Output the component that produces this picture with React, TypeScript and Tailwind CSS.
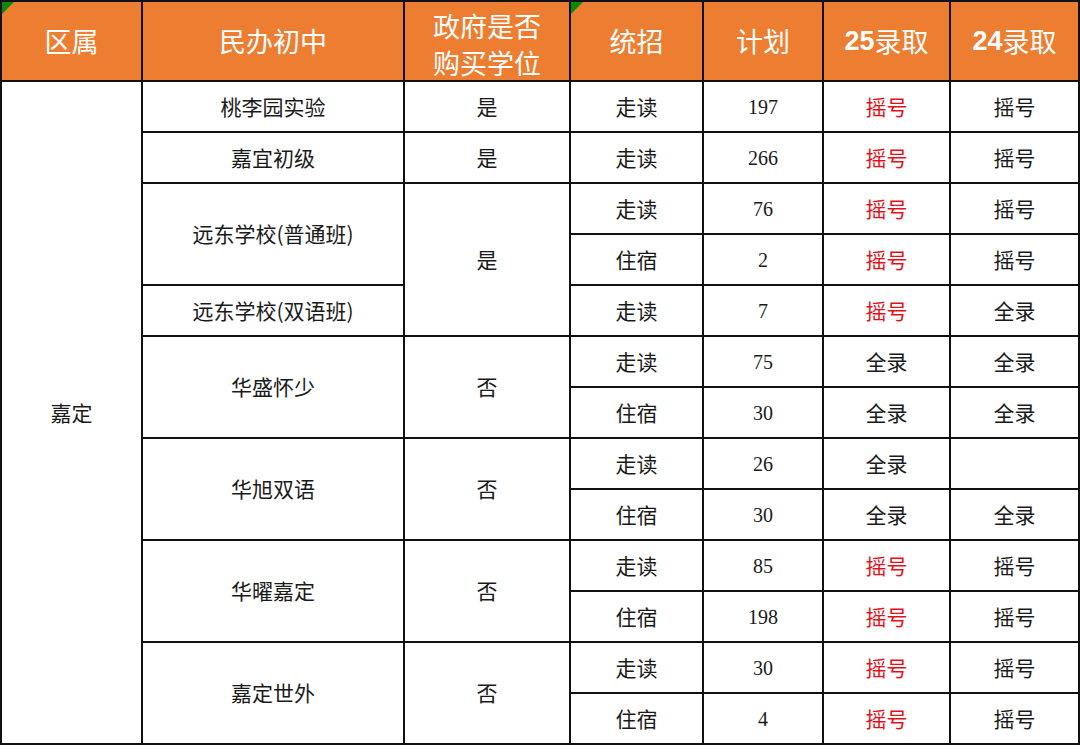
import React from "react"

const cjk = "font-['Noto_Sans_CJK_SC',sans-serif]"
const serif = "font-['Liberation_Serif','Noto_Sans_CJK_SC',serif]"

type Row = { type: string; plan: string; y25: string; y24: string }

const rows: Row[] = [
  { type: "走读", plan: "197", y25: "摇号", y24: "摇号" },
  { type: "走读", plan: "266", y25: "摇号", y24: "摇号" },
  { type: "走读", plan: "76", y25: "摇号", y24: "摇号" },
  { type: "住宿", plan: "2", y25: "摇号", y24: "摇号" },
  { type: "走读", plan: "7", y25: "摇号", y24: "全录" },
  { type: "走读", plan: "75", y25: "全录", y24: "全录" },
  { type: "住宿", plan: "30", y25: "全录", y24: "全录" },
  { type: "走读", plan: "26", y25: "全录", y24: "" },
  { type: "住宿", plan: "30", y25: "全录", y24: "全录" },
  { type: "走读", plan: "85", y25: "摇号", y24: "摇号" },
  { type: "住宿", plan: "198", y25: "摇号", y24: "摇号" },
  { type: "走读", plan: "30", y25: "摇号", y24: "摇号" },
  { type: "住宿", plan: "4", y25: "摇号", y24: "摇号" },
]

// school name / buy-seat columns, keyed by start row (1-based among body rows)
const schools: Record<number, { name: string; span: string }> = {
  1: { name: "桃李园实验", span: "" },
  2: { name: "嘉宜初级", span: "" },
  3: { name: "远东学校(普通班)", span: "row-span-2" },
  5: { name: "远东学校(双语班)", span: "" },
  6: { name: "华盛怀少", span: "row-span-2" },
  8: { name: "华旭双语", span: "row-span-2" },
  10: { name: "华曜嘉定", span: "row-span-2" },
  12: { name: "嘉定世外", span: "row-span-2" },
}

const buy: Record<number, { val: string; span: string }> = {
  1: { val: "是", span: "" },
  2: { val: "是", span: "" },
  3: { val: "是", span: "row-span-3" },
  6: { val: "否", span: "row-span-2" },
  8: { val: "否", span: "row-span-2" },
  10: { val: "否", span: "row-span-2" },
  12: { val: "否", span: "row-span-2" },
}

const Cell = ({
  children,
  className = "",
  font = cjk,
}: {
  children?: React.ReactNode
  className?: string
  font?: string
}) => (
  <div className={`bg-white flex items-center justify-center text-[#1a1a1a] ${font} ${className}`}>
    {children}
  </div>
)

const Head = ({ children, className = "" }: { children?: React.ReactNode; className?: string }) => (
  <div className={`relative bg-[#ed7d31] flex items-center justify-center text-[27px] text-white overflow-hidden ${cjk} ${className}`}>
    {children}
  </div>
)

const Flag = () => (
  <div className="absolute left-0 top-0 w-0 h-0 border-t-[12px] border-t-[#0a8a0a] border-r-[12px] border-r-transparent" />
)

export default function App() {
  return (
    <div className="w-[1080px] h-[745px] bg-white overflow-hidden">
      <div className="grid grid-cols-[139px_260px_164px_131px_118px_125px_127px] grid-rows-[78px_repeat(13,49px)] gap-[2px] bg-[#111] p-[2px] w-[1080px]">
        <Head>
          <Flag />
          区属
        </Head>
        <Head>民办初中</Head>
        <Head className="flex-col justify-start pt-[5px] leading-[37px]">
          <span>政府是否</span>
          <span>购买学位</span>
        </Head>
        <Head>
          <Flag />
          统招
        </Head>
        <Head>计划</Head>
        <Head>
          <span className="font-['Liberation_Sans',sans-serif] font-bold">25</span>录取
        </Head>
        <Head>
          <span className="font-['Liberation_Sans',sans-serif] font-bold">24</span>录取
        </Head>

        {rows.map((r, i) => {
          const n = i + 1
          return (
            <React.Fragment key={n}>
              {n === 1 && <Cell className="row-span-13 text-[21px]">嘉定</Cell>}
              {schools[n] && <Cell className={`${schools[n].span} text-[21px]`}>{schools[n].name}</Cell>}
              {buy[n] && <Cell className={`${buy[n].span} text-[21px]`}>{buy[n].val}</Cell>}
              <Cell className="text-[21px]">{r.type}</Cell>
              <Cell font={serif} className="text-[20px]">{r.plan}</Cell>
              <Cell className={`text-[21px] ${r.y25 === "摇号" ? "text-[#e60f19]" : ""}`}>{r.y25}</Cell>
              <Cell className="text-[21px]">{r.y24}</Cell>
            </React.Fragment>
          )
        })}
      </div>
    </div>
  )
}
